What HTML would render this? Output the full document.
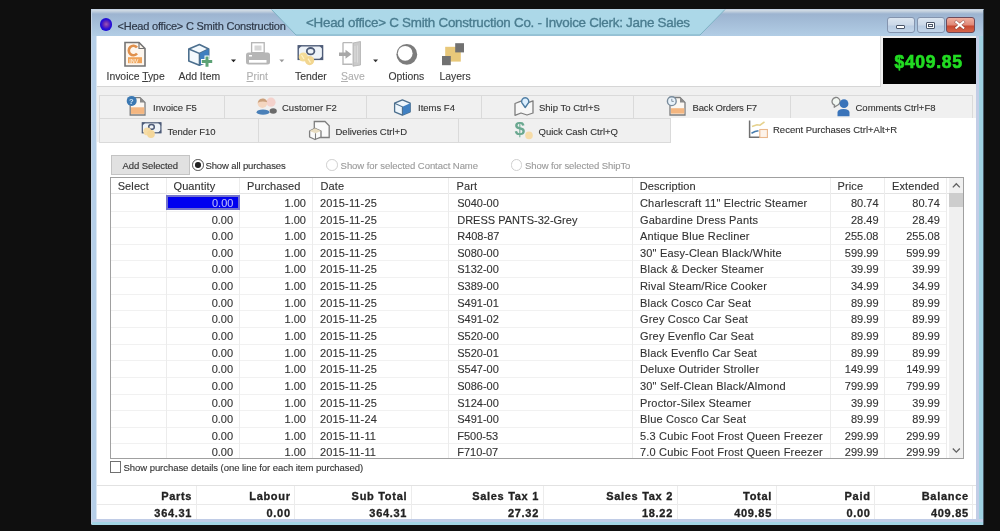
<!DOCTYPE html>
<html><head><meta charset="utf-8">
<style>
*{margin:0;padding:0;box-sizing:border-box}
html,body{width:1000px;height:531px;overflow:hidden;background:#0f0f0f;font-family:"Liberation Sans",sans-serif;color:#222}
div,span,svg{position:absolute}
.t{white-space:nowrap;-webkit-text-stroke:0.12px currentColor}
</style></head><body><div style="left:0;top:0;width:1000px;height:531px;filter:blur(0.3px)">
<!-- window frame -->
<div style="left:91px;top:9px;width:893px;height:516px;background:#b6cfe8;border:1px solid #c6d4e4;border-right-color:#4a5a68;border-bottom-color:#2a4452"></div>
<div style="left:96px;top:36px;width:1.5px;height:483px;background:#dce8f4"></div>
<div style="left:92px;top:10px;width:891px;height:26px;background:linear-gradient(#d2dce6 0,#c8d4e0 1px,#9db4d0 4px,#a4bdd8 12px,#b1cce4 25px)"></div>
<!-- right frame accents -->
<div style="left:976px;top:36px;width:3px;height:483px;background:#c3cde6"></div>
<div style="left:979px;top:36px;width:4px;height:483px;background:#9fd2e2"></div>
<div style="left:92px;top:519px;width:891px;height:2.5px;background:#c0cce6"></div>
<div style="left:92px;top:521.5px;width:891px;height:3px;background:#a2d4e4"></div>
<!-- client -->
<div style="left:97px;top:36px;width:879px;height:483px;background:#f0f0f0"></div>

<!-- title icon -->
<div style="left:99.8px;top:18.3px;width:12.6px;height:12.6px;border-radius:50%;background:radial-gradient(circle at 52% 48%,#9a58b8 0,#6a2cb4 2.5px,#2a10d4 4.8px,#1c0cd8 6.3px)"></div>
<div class="t" style="left:117.5px;top:20px;font-size:11px;color:#2e3848;letter-spacing:-0.21px;-webkit-text-stroke:0.2px #2e3848">&lt;Head office&gt; C Smith Construction</div>
<!-- title tab -->
<svg style="left:0;top:0" width="1000" height="40"><polygon points="271.5,9.5 725,9.5 700,35 296,35" fill="#acd8e8"/><polyline points="271.5,9.5 296,35 700,35 725,9.5" fill="none" stroke="#7eb2c4" stroke-width="1"/></svg>
<div class="t" style="left:306px;top:15px;font-size:13.4px;color:#4a7c8f;letter-spacing:-0.26px;-webkit-text-stroke:0.35px #4a7c8f">&lt;Head office&gt; C Smith Construction Co. - Invoice Clerk: Jane Sales</div>
<!-- window buttons -->
<div style="left:887px;top:17px;width:27.5px;height:16px;border:1px solid #8494ae;border-radius:3px;background:linear-gradient(#dbe5f0 0,#cbd8e8 7px,#b9cce2 8px,#c3d6ea 15px)"></div>
<div style="left:896px;top:25px;width:9px;height:3.5px;border:1px solid #4a5568;background:#fff;border-radius:1px"></div>
<div style="left:917px;top:17px;width:27.5px;height:16px;border:1px solid #8494ae;border-radius:3px;background:linear-gradient(#dbe5f0 0,#cbd8e8 7px,#b9cce2 8px,#c3d6ea 15px)"></div>
<div style="left:925.5px;top:21.5px;width:9.5px;height:7.5px;border:1px solid #4a5568;background:#fff;border-radius:1px"></div>
<div style="left:927.5px;top:23.5px;width:5.5px;height:3.5px;border:1px solid #4a5568"></div>
<div style="left:946px;top:17px;width:28.5px;height:16px;border:1px solid #6e4a5a;border-radius:3px;background:linear-gradient(#f0b0a0 0,#e08878 7px,#c84830 8px,#d86a50 15px)"></div>
<svg style="left:950px;top:16px" width="20" height="18" viewBox="950 16 20 18"><path d="M956.3 22 L963.3 27.8 M963.3 22 L956.3 27.8" stroke="#5a3030" stroke-width="3.2" stroke-linecap="square" opacity="0.45"/><path d="M956.3 22 L963.3 27.8 M963.3 22 L956.3 27.8" stroke="#fff" stroke-width="2" stroke-linecap="square"/></svg>

<!-- toolbar -->
<div style="left:97px;top:36px;width:784px;height:51px;background:#fff;border-right:1px solid #dcdcdc;border-bottom:1px solid #d6d6d6"></div>
<div style="left:883px;top:38px;width:92.5px;height:46px;background:#000"></div>
<div class="t" style="left:894.5px;top:51.5px;font-size:17.5px;font-weight:bold;color:#22dc22;letter-spacing:0.7px;-webkit-text-stroke:0.7px #22dc22">$409.85</div>
<div class="t" style="left:106.5px;top:71px;font-size:10.4px;color:#3a3a3a">Invoice <u>T</u>ype</div>
<div class="t" style="left:178.5px;top:71px;font-size:10.4px;color:#3a3a3a">Add Item</div>
<div class="t" style="left:246.5px;top:71px;font-size:10.4px;color:#b0b0b0"><u>P</u>rint</div>
<div class="t" style="left:295px;top:71px;font-size:10.4px;color:#3a3a3a">Tender</div>
<div class="t" style="left:341px;top:71px;font-size:10.4px;color:#b0b0b0"><u>S</u>ave</div>
<div class="t" style="left:388.5px;top:71px;font-size:10.4px;color:#3a3a3a">Options</div>
<div class="t" style="left:439.5px;top:71px;font-size:10.4px;color:#3a3a3a">Layers</div>
<svg style="left:0;top:0" width="1000" height="90">
 <!-- invoice type -->
 <path d="M125 42.5 H139 L145 48.5 V66 H125 Z" fill="#fdf6ee" stroke="#747474" stroke-width="1.6"/>
 <path d="M139 42.5 V48.5 H145" fill="none" stroke="#747474" stroke-width="1.2"/>
 <path d="M137 47.5 A4.6 4.8 0 1 0 137 53.5" fill="none" stroke="#e0904c" stroke-width="2.6"/>
 <rect x="128" y="57.2" width="14" height="6" fill="#f0a45a"/>
 <text x="129.2" y="62.5" font-size="5.5" font-family="Liberation Sans" font-weight="bold" fill="#fde6cc">INV</text>
 <!-- add item -->
 <path d="M199.4 44.5 L208.7 49 V61 L199.4 65.3 L188.8 61 V49 Z" fill="#f3f9fd" stroke="#4c6f8e" stroke-width="1.6" stroke-linejoin="round"/>
 <path d="M188.8 49 L199.4 53.5 L208.7 49" fill="none" stroke="#4c6f8e" stroke-width="1.4"/>
 <path d="M199.4 53.5 L208.7 49 V61 L199.4 65.3 Z" fill="#3f7fc0"/>
 <path d="M199.4 53.5 V65.3" stroke="#4c6f8e" stroke-width="1.4"/>
 <path d="M207 55.5 V67.5 M201 61.6 H213" stroke="#fff" stroke-width="5"/>
 <path d="M207 56.5 V66.8 M201.8 61.6 H212.2" stroke="#5ca276" stroke-width="3"/>
 <path d="M231 59.5 L236 59.5 L233.5 62.3 Z" fill="#222"/>
 <!-- print -->
 <rect x="251.6" y="42.7" width="12.6" height="10" fill="#fff" stroke="#b4b4b4" stroke-width="1.3"/>
 <rect x="254.5" y="45.5" width="7" height="5" fill="#d6d6d6"/>
 <rect x="246" y="52.5" width="24" height="12" rx="2.5" fill="#b6b6b6"/>
 <rect x="249" y="60" width="17.5" height="2.7" fill="#fff"/>
 <rect x="249" y="55" width="3" height="1.5" fill="#fff"/>
 <path d="M279.3 59.5 L284.3 59.5 L281.8 62.3 Z" fill="#999"/>
 <!-- tender -->
 <rect x="298.2" y="45.8" width="24.4" height="13.6" fill="#eef3f8" stroke="#4e5c78" stroke-width="1.4"/>
 <path d="M298 45.5 h4 l-4 4 Z M323 45.5 h-4 l4 4 Z M298 59.5 h4 l-4 -4 Z M323 59.5 h-4 l4 -4 Z" fill="#4e5c78"/>
 <ellipse cx="310.6" cy="51.2" rx="3.8" ry="3.2" fill="none" stroke="#4e5c78" stroke-width="1.8"/>
 <circle cx="303.3" cy="57" r="4.6" fill="#f4dc98"/>
 <circle cx="309.6" cy="60.6" r="4.6" fill="#f2d690"/>
 <path d="M301.5 55 l2.5 4 M308 58.6 l2.5 4" stroke="#fff3c8" stroke-width="1.2"/>
 <!-- save -->
 <path d="M343 42.6 V64.2 H352.5 M343 42.6 H352.5" fill="none" stroke="#b8b8b8" stroke-width="1.4"/>
 <path d="M353 43 L360.5 41.5 V65 L353 66.2 Z" fill="#cacaca" stroke="#b0b0b0" stroke-width="0.8"/>
 <path d="M355 46 V62 M357.5 45.5 V62.5" stroke="#e0e0e0" stroke-width="0.8"/>
 <path d="M339 52.6 H345.5 V49.8 L351.5 54.3 L345.5 58.8 V56 H339 Z" fill="#a8a8a8"/>
 <path d="M373.1 59.5 L378.1 59.5 L375.6 62.3 Z" fill="#333"/>
 <!-- options -->
 <circle cx="406.8" cy="54.4" r="10.4" fill="#7c7c7c"/>
 <circle cx="405.2" cy="53.3" r="7.4" fill="#fff"/>
 <!-- layers -->
 <rect x="445.2" y="46.8" width="15.6" height="14.8" fill="#e8c87a"/>
 <rect x="455.2" y="43.2" width="8.8" height="9.2" fill="#717171"/>
 <rect x="442" y="56" width="8.8" height="9.2" fill="#717171"/>
</svg>

<!-- content white -->
<div style="left:97px;top:142px;width:879px;height:377px;background:#fff"></div>
<!-- tabs -->
<div style="left:99px;top:95px;width:874px;height:23.5px;border:1px solid #dadada;border-bottom:none;background:#f0f0f0"></div>
<div style="left:224px;top:95px;width:1px;height:23px;background:#dadada"></div>
<div style="left:365.5px;top:95px;width:1px;height:23px;background:#dadada"></div>
<div style="left:480.5px;top:95px;width:1px;height:23px;background:#dadada"></div>
<div style="left:633px;top:95px;width:1px;height:23px;background:#dadada"></div>
<div style="left:790px;top:95px;width:1px;height:23px;background:#dadada"></div>
<div style="left:99px;top:118px;width:572px;height:25px;border:1px solid #dadada;background:#f0f0f0"></div>
<div style="left:257.5px;top:118px;width:1px;height:25px;background:#dadada"></div>
<div style="left:458px;top:118px;width:1px;height:25px;background:#dadada"></div>
<div style="left:671px;top:118px;width:305px;height:25px;background:#fff"></div>
<div class="t" style="left:153px;top:101.5px;font-size:9.5px;color:#333">Invoice F5</div>
<div class="t" style="left:282px;top:101.5px;font-size:9.5px;color:#333">Customer F2</div>
<div class="t" style="left:418px;top:101.5px;font-size:9.5px;color:#333">Items F4</div>
<div class="t" style="left:539px;top:101.5px;font-size:9.5px;color:#333">Ship To Ctrl+S</div>
<div class="t" style="left:692.5px;top:101.5px;font-size:9.5px;color:#333;letter-spacing:-0.15px">Back Orders F7</div>
<div class="t" style="left:855.5px;top:101.5px;font-size:9.5px;color:#333">Comments Ctrl+F8</div>
<div class="t" style="left:167.5px;top:125.5px;font-size:9.5px;color:#333">Tender F10</div>
<div class="t" style="left:335.5px;top:125.5px;font-size:9.5px;color:#333">Deliveries Ctrl+D</div>
<div class="t" style="left:538.5px;top:125.5px;font-size:9.5px;color:#333">Quick Cash Ctrl+Q</div>
<div class="t" style="left:773px;top:123.5px;font-size:9.5px;color:#333">Recent Purchases Ctrl+Alt+R</div>
<svg style="left:0;top:90px" width="1000" height="55" viewBox="0 90 1000 55">
 <!-- invoice F5 -->
 <path d="M130.2 97.6 H140 L145 102.6 V115 H130.2 Z" fill="#fbf7f2" stroke="#7c7c7c" stroke-width="1.3"/>
 <rect x="131" y="107.3" width="13.3" height="6.6" fill="#f4b680"/><path d="M140 97.6 V102.6 H145 Z" fill="#8a8a8a"/>
 <circle cx="131.7" cy="100.9" r="5" fill="#3b78b2"/>
 <text x="129.1" y="104.1" font-size="7.5" font-weight="bold" font-family="Liberation Sans" fill="#cfe6f8">?</text>
 <!-- customer F2 -->
 <circle cx="271" cy="102.2" r="4.6" fill="#f4d2cc"/>
 <ellipse cx="273.2" cy="111" rx="3.6" ry="2.8" fill="#6a6a6a"/>
 <ellipse cx="263" cy="112.2" rx="6.4" ry="2.6" fill="#4a80b8"/>
 <circle cx="262.4" cy="103.2" r="4.8" fill="#f4d6c0"/>
 <path d="M257.8 102.8 A4.8 4.8 0 0 1 267.2 102.2 Q262 100.5 257.8 102.8 Z" fill="#caa07c"/>
 <!-- items F4 -->
 <path d="M402.4 99.8 L410.2 103.2 V111.8 L402.4 115.2 L394.6 111.8 V103.2 Z" fill="#eef6fc" stroke="#4c6f8e" stroke-width="1.3" stroke-linejoin="round"/>
 <path d="M402.4 106.8 L410.2 103.2 V111.8 L402.4 115.2 Z" fill="#3f80c2"/>
 <path d="M394.6 103.2 L402.4 106.8 V115.2" fill="none" stroke="#4c6f8e" stroke-width="1.1"/>
 <!-- ship to -->
 <path d="M515 103.5 L521 101.2 L527 103.2 L533 100.8 V113 L527 115 L521 113 L515 115.3 Z" fill="#f7f7f7" stroke="#7e7e7e" stroke-width="1.3" stroke-linejoin="round"/>
 <path d="M525.2 107.5 L521.8 102.6 A3.6 3.6 0 1 1 528.6 102.6 Z" fill="#dcefff" stroke="#4c7ca2" stroke-width="1.4" stroke-linejoin="round"/>
 <!-- back orders -->
 <path d="M670 97.5 H680 L685 102.5 V115 H670 Z" fill="#fbf7f2" stroke="#7c7c7c" stroke-width="1.3"/>
 <rect x="671" y="108.2" width="13.3" height="5.4" fill="#f4b680"/><path d="M680 97.5 V102.5 H685 Z" fill="#8a8a8a"/>
 <circle cx="671.8" cy="101.2" r="4.4" fill="#e8f2fa" stroke="#7a8c9c" stroke-width="1.4"/>
 <path d="M671.8 98.8 V101.4 H673.8" fill="none" stroke="#7a8c9c" stroke-width="0.9"/>
 <!-- comments -->
 <path d="M834.2 107.2 L834.6 105.2 A4 4 0 1 1 838.2 104.8 Z" fill="#f2f7f2" stroke="#858585" stroke-width="1.3" stroke-linejoin="round"/>
 <circle cx="844" cy="103.7" r="4.4" fill="#3a74ba"/>
 <path d="M837.5 116.2 V112.5 Q837.5 109 843.5 109 Q849.5 109 849.5 112.5 V116.2 Z" fill="#3a74ba"/>
 <!-- tender F10 -->
 <rect x="142.3" y="122.8" width="18.6" height="10" fill="#eef3f8" stroke="#4e5c78" stroke-width="1.2"/>
 <path d="M142 122.5 h3.5 l-3.5 3.5 Z M161.2 122.5 h-3.5 l3.5 3.5 Z M161.2 133 h-3.5 l3.5 -3.5 Z" fill="#4e5c78"/>
 <ellipse cx="151.5" cy="126.9" rx="2.8" ry="2.4" fill="none" stroke="#4e5c78" stroke-width="1.5"/>
 <circle cx="147.3" cy="131.4" r="3.9" fill="#f6dca6"/>
 <circle cx="151" cy="134" r="3.9" fill="#f4d79a"/>
 <!-- deliveries -->
 <path d="M314.3 121.5 H325 L329.2 125.7 V137.5 H314.3 Z" fill="#fafafa" stroke="#7e7e7e" stroke-width="1.3"/>
 <path d="M309.6 131 L315 128.3 L321 131 V137 L315 139.5 L309.6 137 Z" fill="#fbfbfb" stroke="#7e7e7e" stroke-width="1.3" stroke-linejoin="round"/>
 <path d="M309.6 131 L315 128.3 L321 131 L315.5 133.3 Z" fill="#e8dcc0"/>
 <path d="M315.5 133.3 V139.3" stroke="#7e7e7e" stroke-width="1.1"/>
 <!-- quick cash -->
 <text x="514.4" y="135.3" font-size="19" font-weight="bold" font-family="Liberation Sans" fill="#6aa890">$</text>
 <circle cx="529" cy="135.4" r="3.8" fill="#f6dca8"/>
 <!-- recent purchases -->
 <path d="M749.6 120.5 V137.2 H760" fill="none" stroke="#707070" stroke-width="1.5"/>
 <path d="M752 126.5 L757 124.8 L760 125.2 L764.5 121.8" fill="none" stroke="#e6d28e" stroke-width="1.6"/>
 <path d="M751.5 133.3 L755 131.5 L758.5 130.8" fill="none" stroke="#4a7eae" stroke-width="1.6"/>
 <rect x="759.8" y="129.5" width="7.6" height="8" fill="#fdf3ea" stroke="#eab88c" stroke-width="1.1"/>
</svg>
<!-- CONTENT -->
<!-- add selected / radios -->
<div style="left:110.8px;top:155px;width:79.2px;height:20.2px;background:#e1e1e1;border:1px solid #c4c4c4"></div>
<div class="t" style="left:122.6px;top:159.5px;font-size:9.5px;color:#333;letter-spacing:-0.1px">Add Selected</div>
<div style="left:192.2px;top:159.2px;width:11.6px;height:11.6px;border-radius:50%;border:1px solid #505050;background:#fff"></div>
<div style="left:195.2px;top:162.2px;width:5.6px;height:5.6px;border-radius:50%;background:#222"></div>
<div class="t" style="left:205.5px;top:159.5px;font-size:9.5px;color:#333;letter-spacing:-0.13px">Show all purchases</div>
<div style="left:326.2px;top:159.2px;width:11.6px;height:11.6px;border-radius:50%;border:1px solid #cfcfcf;background:#fff"></div>
<div class="t" style="left:340.6px;top:159.5px;font-size:9.5px;color:#9a9a9a;letter-spacing:-0.05px">Show for selected Contact Name</div>
<div style="left:510.7px;top:159.2px;width:11.6px;height:11.6px;border-radius:50%;border:1px solid #cfcfcf;background:#fff"></div>
<div class="t" style="left:525px;top:159.5px;font-size:9.5px;color:#9a9a9a;letter-spacing:-0.08px">Show for selected ShipTo</div>
<!-- grid -->
<div style="left:110px;top:177px;width:854px;height:281.5px;border:1px solid #a0a0a0;background:#fff;overflow:hidden">
<div style="left:0;top:15px;width:840px;height:1px;background:#e4e4e4"></div>
<div style="left:0;top:33.00px;width:836px;height:1px;background:#f1f1f1"></div>
<div style="left:0;top:49.00px;width:836px;height:1px;background:#f1f1f1"></div>
<div style="left:0;top:66.00px;width:836px;height:1px;background:#f1f1f1"></div>
<div style="left:0;top:82.00px;width:836px;height:1px;background:#f1f1f1"></div>
<div style="left:0;top:99.00px;width:836px;height:1px;background:#f1f1f1"></div>
<div style="left:0;top:116.00px;width:836px;height:1px;background:#f1f1f1"></div>
<div style="left:0;top:132.00px;width:836px;height:1px;background:#f1f1f1"></div>
<div style="left:0;top:149.00px;width:836px;height:1px;background:#f1f1f1"></div>
<div style="left:0;top:166.00px;width:836px;height:1px;background:#f1f1f1"></div>
<div style="left:0;top:182.00px;width:836px;height:1px;background:#f1f1f1"></div>
<div style="left:0;top:199.00px;width:836px;height:1px;background:#f1f1f1"></div>
<div style="left:0;top:216.00px;width:836px;height:1px;background:#f1f1f1"></div>
<div style="left:0;top:232.00px;width:836px;height:1px;background:#f1f1f1"></div>
<div style="left:0;top:249.00px;width:836px;height:1px;background:#f1f1f1"></div>
<div style="left:0;top:265.00px;width:836px;height:1px;background:#f1f1f1"></div>
<div style="left:0;top:282.00px;width:836px;height:1px;background:#f1f1f1"></div>
<div style="left:55px;top:0;width:1px;height:290px;background:#ececec"></div>
<div style="left:128px;top:0;width:1px;height:290px;background:#ececec"></div>
<div style="left:201px;top:0;width:1px;height:290px;background:#ececec"></div>
<div style="left:337px;top:0;width:1px;height:290px;background:#ececec"></div>
<div style="left:521px;top:0;width:1px;height:290px;background:#ececec"></div>
<div style="left:719px;top:0;width:1px;height:290px;background:#ececec"></div>
<div style="left:773px;top:0;width:1px;height:290px;background:#ececec"></div>
<div style="left:835px;top:0;width:1px;height:290px;background:#ececec"></div>
<div class="t" style="left:6.7px;top:2px;font-size:11px;color:#333;letter-spacing:0.1px">Select</div>
<div class="t" style="left:62.5px;top:2px;font-size:11px;color:#333;letter-spacing:0.1px">Quantity</div>
<div class="t" style="left:136.0px;top:2px;font-size:11px;color:#333;letter-spacing:0.1px">Purchased</div>
<div class="t" style="left:209.5px;top:2px;font-size:11px;color:#333;letter-spacing:0.1px">Date</div>
<div class="t" style="left:345.5px;top:2px;font-size:11px;color:#333;letter-spacing:0.1px">Part</div>
<div class="t" style="left:528.7px;top:2px;font-size:11px;color:#333;letter-spacing:0.1px">Description</div>
<div class="t" style="left:726.6px;top:2px;font-size:11px;color:#333;letter-spacing:0.1px">Price</div>
<div class="t" style="left:781.0px;top:2px;font-size:11px;color:#333;letter-spacing:0.1px">Extended</div>
<div class="t" style="right:657.0px;top:18.9px;font-size:11px;color:#333">1.00</div>
<div class="t" style="left:209px;top:18.9px;font-size:11px;color:#333;letter-spacing:0.15px">2015-11-25</div>
<div class="t" style="left:346.2px;top:18.9px;font-size:11px;color:#333">S040-00</div>
<div class="t" style="left:529px;top:18.9px;font-size:11px;color:#333;letter-spacing:0.18px">Charlescraft 11" Electric Steamer</div>
<div class="t" style="right:84.5px;top:18.9px;font-size:11px;color:#333">80.74</div>
<div class="t" style="right:23.2px;top:18.9px;font-size:11px;color:#333">80.74</div>
<div class="t" style="right:729.9px;top:35.5px;font-size:11px;color:#333">0.00</div>
<div class="t" style="right:657.0px;top:35.5px;font-size:11px;color:#333">1.00</div>
<div class="t" style="left:209px;top:35.5px;font-size:11px;color:#333;letter-spacing:0.15px">2015-11-25</div>
<div class="t" style="left:346.2px;top:35.5px;font-size:11px;color:#333">DRESS PANTS-32-Grey</div>
<div class="t" style="left:529px;top:35.5px;font-size:11px;color:#333;letter-spacing:0.18px">Gabardine Dress Pants</div>
<div class="t" style="right:84.5px;top:35.5px;font-size:11px;color:#333">28.49</div>
<div class="t" style="right:23.2px;top:35.5px;font-size:11px;color:#333">28.49</div>
<div class="t" style="right:729.9px;top:52.2px;font-size:11px;color:#333">0.00</div>
<div class="t" style="right:657.0px;top:52.2px;font-size:11px;color:#333">1.00</div>
<div class="t" style="left:209px;top:52.2px;font-size:11px;color:#333;letter-spacing:0.15px">2015-11-25</div>
<div class="t" style="left:346.2px;top:52.2px;font-size:11px;color:#333">R408-87</div>
<div class="t" style="left:529px;top:52.2px;font-size:11px;color:#333;letter-spacing:0.18px">Antique Blue Recliner</div>
<div class="t" style="right:84.5px;top:52.2px;font-size:11px;color:#333">255.08</div>
<div class="t" style="right:23.2px;top:52.2px;font-size:11px;color:#333">255.08</div>
<div class="t" style="right:729.9px;top:68.8px;font-size:11px;color:#333">0.00</div>
<div class="t" style="right:657.0px;top:68.8px;font-size:11px;color:#333">1.00</div>
<div class="t" style="left:209px;top:68.8px;font-size:11px;color:#333;letter-spacing:0.15px">2015-11-25</div>
<div class="t" style="left:346.2px;top:68.8px;font-size:11px;color:#333">S080-00</div>
<div class="t" style="left:529px;top:68.8px;font-size:11px;color:#333;letter-spacing:0.18px">30" Easy-Clean Black/White</div>
<div class="t" style="right:84.5px;top:68.8px;font-size:11px;color:#333">599.99</div>
<div class="t" style="right:23.2px;top:68.8px;font-size:11px;color:#333">599.99</div>
<div class="t" style="right:729.9px;top:85.4px;font-size:11px;color:#333">0.00</div>
<div class="t" style="right:657.0px;top:85.4px;font-size:11px;color:#333">1.00</div>
<div class="t" style="left:209px;top:85.4px;font-size:11px;color:#333;letter-spacing:0.15px">2015-11-25</div>
<div class="t" style="left:346.2px;top:85.4px;font-size:11px;color:#333">S132-00</div>
<div class="t" style="left:529px;top:85.4px;font-size:11px;color:#333;letter-spacing:0.18px">Black &amp; Decker Steamer</div>
<div class="t" style="right:84.5px;top:85.4px;font-size:11px;color:#333">39.99</div>
<div class="t" style="right:23.2px;top:85.4px;font-size:11px;color:#333">39.99</div>
<div class="t" style="right:729.9px;top:102.1px;font-size:11px;color:#333">0.00</div>
<div class="t" style="right:657.0px;top:102.1px;font-size:11px;color:#333">1.00</div>
<div class="t" style="left:209px;top:102.1px;font-size:11px;color:#333;letter-spacing:0.15px">2015-11-25</div>
<div class="t" style="left:346.2px;top:102.1px;font-size:11px;color:#333">S389-00</div>
<div class="t" style="left:529px;top:102.1px;font-size:11px;color:#333;letter-spacing:0.18px">Rival Steam/Rice Cooker</div>
<div class="t" style="right:84.5px;top:102.1px;font-size:11px;color:#333">34.99</div>
<div class="t" style="right:23.2px;top:102.1px;font-size:11px;color:#333">34.99</div>
<div class="t" style="right:729.9px;top:118.7px;font-size:11px;color:#333">0.00</div>
<div class="t" style="right:657.0px;top:118.7px;font-size:11px;color:#333">1.00</div>
<div class="t" style="left:209px;top:118.7px;font-size:11px;color:#333;letter-spacing:0.15px">2015-11-25</div>
<div class="t" style="left:346.2px;top:118.7px;font-size:11px;color:#333">S491-01</div>
<div class="t" style="left:529px;top:118.7px;font-size:11px;color:#333;letter-spacing:0.18px">Black Cosco Car Seat</div>
<div class="t" style="right:84.5px;top:118.7px;font-size:11px;color:#333">89.99</div>
<div class="t" style="right:23.2px;top:118.7px;font-size:11px;color:#333">89.99</div>
<div class="t" style="right:729.9px;top:135.3px;font-size:11px;color:#333">0.00</div>
<div class="t" style="right:657.0px;top:135.3px;font-size:11px;color:#333">1.00</div>
<div class="t" style="left:209px;top:135.3px;font-size:11px;color:#333;letter-spacing:0.15px">2015-11-25</div>
<div class="t" style="left:346.2px;top:135.3px;font-size:11px;color:#333">S491-02</div>
<div class="t" style="left:529px;top:135.3px;font-size:11px;color:#333;letter-spacing:0.18px">Grey Cosco Car Seat</div>
<div class="t" style="right:84.5px;top:135.3px;font-size:11px;color:#333">89.99</div>
<div class="t" style="right:23.2px;top:135.3px;font-size:11px;color:#333">89.99</div>
<div class="t" style="right:729.9px;top:151.9px;font-size:11px;color:#333">0.00</div>
<div class="t" style="right:657.0px;top:151.9px;font-size:11px;color:#333">1.00</div>
<div class="t" style="left:209px;top:151.9px;font-size:11px;color:#333;letter-spacing:0.15px">2015-11-25</div>
<div class="t" style="left:346.2px;top:151.9px;font-size:11px;color:#333">S520-00</div>
<div class="t" style="left:529px;top:151.9px;font-size:11px;color:#333;letter-spacing:0.18px">Grey Evenflo Car Seat</div>
<div class="t" style="right:84.5px;top:151.9px;font-size:11px;color:#333">89.99</div>
<div class="t" style="right:23.2px;top:151.9px;font-size:11px;color:#333">89.99</div>
<div class="t" style="right:729.9px;top:168.6px;font-size:11px;color:#333">0.00</div>
<div class="t" style="right:657.0px;top:168.6px;font-size:11px;color:#333">1.00</div>
<div class="t" style="left:209px;top:168.6px;font-size:11px;color:#333;letter-spacing:0.15px">2015-11-25</div>
<div class="t" style="left:346.2px;top:168.6px;font-size:11px;color:#333">S520-01</div>
<div class="t" style="left:529px;top:168.6px;font-size:11px;color:#333;letter-spacing:0.18px">Black Evenflo Car Seat</div>
<div class="t" style="right:84.5px;top:168.6px;font-size:11px;color:#333">89.99</div>
<div class="t" style="right:23.2px;top:168.6px;font-size:11px;color:#333">89.99</div>
<div class="t" style="right:729.9px;top:185.2px;font-size:11px;color:#333">0.00</div>
<div class="t" style="right:657.0px;top:185.2px;font-size:11px;color:#333">1.00</div>
<div class="t" style="left:209px;top:185.2px;font-size:11px;color:#333;letter-spacing:0.15px">2015-11-25</div>
<div class="t" style="left:346.2px;top:185.2px;font-size:11px;color:#333">S547-00</div>
<div class="t" style="left:529px;top:185.2px;font-size:11px;color:#333;letter-spacing:0.18px">Deluxe Outrider Stroller</div>
<div class="t" style="right:84.5px;top:185.2px;font-size:11px;color:#333">149.99</div>
<div class="t" style="right:23.2px;top:185.2px;font-size:11px;color:#333">149.99</div>
<div class="t" style="right:729.9px;top:201.8px;font-size:11px;color:#333">0.00</div>
<div class="t" style="right:657.0px;top:201.8px;font-size:11px;color:#333">1.00</div>
<div class="t" style="left:209px;top:201.8px;font-size:11px;color:#333;letter-spacing:0.15px">2015-11-25</div>
<div class="t" style="left:346.2px;top:201.8px;font-size:11px;color:#333">S086-00</div>
<div class="t" style="left:529px;top:201.8px;font-size:11px;color:#333;letter-spacing:0.18px">30" Self-Clean Black/Almond</div>
<div class="t" style="right:84.5px;top:201.8px;font-size:11px;color:#333">799.99</div>
<div class="t" style="right:23.2px;top:201.8px;font-size:11px;color:#333">799.99</div>
<div class="t" style="right:729.9px;top:218.5px;font-size:11px;color:#333">0.00</div>
<div class="t" style="right:657.0px;top:218.5px;font-size:11px;color:#333">1.00</div>
<div class="t" style="left:209px;top:218.5px;font-size:11px;color:#333;letter-spacing:0.15px">2015-11-25</div>
<div class="t" style="left:346.2px;top:218.5px;font-size:11px;color:#333">S124-00</div>
<div class="t" style="left:529px;top:218.5px;font-size:11px;color:#333;letter-spacing:0.18px">Proctor-Silex Steamer</div>
<div class="t" style="right:84.5px;top:218.5px;font-size:11px;color:#333">39.99</div>
<div class="t" style="right:23.2px;top:218.5px;font-size:11px;color:#333">39.99</div>
<div class="t" style="right:729.9px;top:235.1px;font-size:11px;color:#333">0.00</div>
<div class="t" style="right:657.0px;top:235.1px;font-size:11px;color:#333">1.00</div>
<div class="t" style="left:209px;top:235.1px;font-size:11px;color:#333;letter-spacing:0.15px">2015-11-24</div>
<div class="t" style="left:346.2px;top:235.1px;font-size:11px;color:#333">S491-00</div>
<div class="t" style="left:529px;top:235.1px;font-size:11px;color:#333;letter-spacing:0.18px">Blue Cosco Car Seat</div>
<div class="t" style="right:84.5px;top:235.1px;font-size:11px;color:#333">89.99</div>
<div class="t" style="right:23.2px;top:235.1px;font-size:11px;color:#333">89.99</div>
<div class="t" style="right:729.9px;top:251.7px;font-size:11px;color:#333">0.00</div>
<div class="t" style="right:657.0px;top:251.7px;font-size:11px;color:#333">1.00</div>
<div class="t" style="left:209px;top:251.7px;font-size:11px;color:#333;letter-spacing:0.15px">2015-11-11</div>
<div class="t" style="left:346.2px;top:251.7px;font-size:11px;color:#333">F500-53</div>
<div class="t" style="left:529px;top:251.7px;font-size:11px;color:#333;letter-spacing:0.18px">5.3 Cubic Foot Frost Queen Freezer</div>
<div class="t" style="right:84.5px;top:251.7px;font-size:11px;color:#333">299.99</div>
<div class="t" style="right:23.2px;top:251.7px;font-size:11px;color:#333">299.99</div>
<div class="t" style="right:729.9px;top:268.4px;font-size:11px;color:#333">0.00</div>
<div class="t" style="right:657.0px;top:268.4px;font-size:11px;color:#333">1.00</div>
<div class="t" style="left:209px;top:268.4px;font-size:11px;color:#333;letter-spacing:0.15px">2015-11-11</div>
<div class="t" style="left:346.2px;top:268.4px;font-size:11px;color:#333">F710-07</div>
<div class="t" style="left:529px;top:268.4px;font-size:11px;color:#333;letter-spacing:0.18px">7.0 Cubic Foot Frost Queen Freezer</div>
<div class="t" style="right:84.5px;top:268.4px;font-size:11px;color:#333">299.99</div>
<div class="t" style="right:23.2px;top:268.4px;font-size:11px;color:#333">299.99</div>
<div style="left:55.3px;top:16.5px;width:73.4px;height:15.3px;border:2px solid #7474cc;background:#0000f0"></div>
<div class="t" style="right:729.6px;top:18.9px;font-size:11px;color:#b8b8f8">0.00</div>
<div style="left:837.5px;top:0;width:16px;height:290px;background:#f0f0f0"></div>
<div style="left:838.0px;top:14.6px;width:14.5px;height:14.6px;background:#cdcdcd"></div>
</div>
<svg style="left:940px;top:175px" width="30" height="290" viewBox="940 175 30 290"><path d="M952.8 187.4 L956.3 183.8 L959.8 187.4" fill="none" stroke="#606060" stroke-width="1.3"/><path d="M952.8 448.5 L956.3 452.1 L959.8 448.5" fill="none" stroke="#606060" stroke-width="1.3"/></svg>
<!-- checkbox -->
<div style="left:109.8px;top:461.2px;width:11.6px;height:11.6px;border:1px solid #707070;background:#fff"></div>
<div class="t" style="left:123.5px;top:461.5px;font-size:9.5px;color:#333;letter-spacing:-0.05px">Show purchase details (one line for each item purchased)</div>
<!-- totals -->
<div style="left:97px;top:485.2px;width:879px;height:1px;background:#e2e2e2"></div>
<div style="left:97px;top:503.5px;width:879px;height:1px;background:#eaeaea"></div>
<div style="left:195.7px;top:486px;width:1px;height:33px;background:#ececec"></div>
<div class="t" style="right:807.8px;top:490px;font-size:11px;font-weight:bold;color:#222;letter-spacing:0.7px;-webkit-text-stroke:0.3px #222">Parts</div>
<div class="t" style="right:807.8px;top:507px;font-size:11px;font-weight:bold;color:#222;letter-spacing:0.7px;-webkit-text-stroke:0.3px #222">364.31</div>
<div style="left:294.2px;top:486px;width:1px;height:33px;background:#ececec"></div>
<div class="t" style="right:709.3px;top:490px;font-size:11px;font-weight:bold;color:#222;letter-spacing:0.7px;-webkit-text-stroke:0.3px #222">Labour</div>
<div class="t" style="right:709.3px;top:507px;font-size:11px;font-weight:bold;color:#222;letter-spacing:0.7px;-webkit-text-stroke:0.3px #222">0.00</div>
<div style="left:410.7px;top:486px;width:1px;height:33px;background:#ececec"></div>
<div class="t" style="right:592.8px;top:490px;font-size:11px;font-weight:bold;color:#222;letter-spacing:0.7px;-webkit-text-stroke:0.3px #222">Sub Total</div>
<div class="t" style="right:592.8px;top:507px;font-size:11px;font-weight:bold;color:#222;letter-spacing:0.7px;-webkit-text-stroke:0.3px #222">364.31</div>
<div style="left:542.5px;top:486px;width:1px;height:33px;background:#ececec"></div>
<div class="t" style="right:461.0px;top:490px;font-size:11px;font-weight:bold;color:#222;letter-spacing:0.7px;-webkit-text-stroke:0.3px #222">Sales Tax 1</div>
<div class="t" style="right:461.0px;top:507px;font-size:11px;font-weight:bold;color:#222;letter-spacing:0.7px;-webkit-text-stroke:0.3px #222">27.32</div>
<div style="left:676.5px;top:486px;width:1px;height:33px;background:#ececec"></div>
<div class="t" style="right:327.0px;top:490px;font-size:11px;font-weight:bold;color:#222;letter-spacing:0.7px;-webkit-text-stroke:0.3px #222">Sales Tax 2</div>
<div class="t" style="right:327.0px;top:507px;font-size:11px;font-weight:bold;color:#222;letter-spacing:0.7px;-webkit-text-stroke:0.3px #222">18.22</div>
<div style="left:775.5px;top:486px;width:1px;height:33px;background:#ececec"></div>
<div class="t" style="right:228.0px;top:490px;font-size:11px;font-weight:bold;color:#222;letter-spacing:0.7px;-webkit-text-stroke:0.3px #222">Total</div>
<div class="t" style="right:228.0px;top:507px;font-size:11px;font-weight:bold;color:#222;letter-spacing:0.7px;-webkit-text-stroke:0.3px #222">409.85</div>
<div style="left:874.1px;top:486px;width:1px;height:33px;background:#ececec"></div>
<div class="t" style="right:129.4px;top:490px;font-size:11px;font-weight:bold;color:#222;letter-spacing:0.7px;-webkit-text-stroke:0.3px #222">Paid</div>
<div class="t" style="right:129.4px;top:507px;font-size:11px;font-weight:bold;color:#222;letter-spacing:0.7px;-webkit-text-stroke:0.3px #222">0.00</div>
<div style="left:972.3px;top:486px;width:1px;height:33px;background:#ececec"></div>
<div class="t" style="right:31.2px;top:490px;font-size:11px;font-weight:bold;color:#222;letter-spacing:0.7px;-webkit-text-stroke:0.3px #222">Balance</div>
<div class="t" style="right:31.2px;top:507px;font-size:11px;font-weight:bold;color:#222;letter-spacing:0.7px;-webkit-text-stroke:0.3px #222">409.85</div>
<!-- /CONTENT -->
</div></body></html>
